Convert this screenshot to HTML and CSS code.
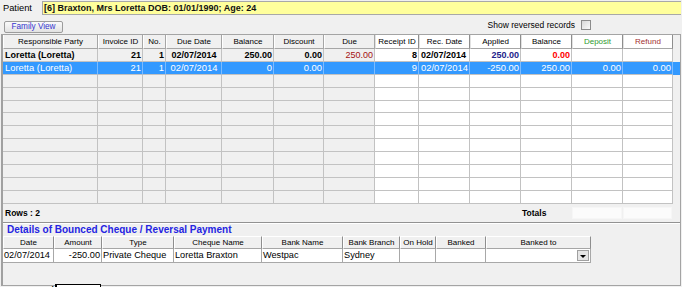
FILE: index.html
```html
<!DOCTYPE html>
<html>
<head>
<meta charset="utf-8">
<link rel="stylesheet" href="styles.css">
</head>
<body>
<div class="top">
  <span class="lbl">Patient</span>
  <div class="patient">[6] Braxton, Mrs Loretta DOB: 01/01/1990; Age: 24</div>
</div>
<div class="toolbar">
  <button class="btn">Family View</button>
  <div class="rev"><span>Show reversed records</span><span class="chk"></span></div>
</div>
<div class="frame">
  <div class="grid">
    <div class="row head">
      <div class="c">Responsible Party</div><div class="c">Invoice ID</div><div class="c">No.</div><div class="c">Due Date</div><div class="c">Balance</div><div class="c">Discount</div><div class="c">Due</div>
      <div class="c w">Receipt ID</div><div class="c w">Rec. Date</div><div class="c w">Applied</div><div class="c w">Balance</div><div class="c w green">Deposit</div><div class="c w maroon">Refund</div><div class="f"></div>
    </div>
    <div class="row r1">
      <div class="c">Loretta (Loretta)</div><div class="c r">21</div><div class="c r">1</div><div class="c ctr">02/07/2014</div><div class="c r">250.00</div><div class="c r">0.00</div><div class="c r due">250.00</div>
      <div class="c w r">8</div><div class="c w">02/07/2014</div><div class="c w r navy">250.00</div><div class="c w r red">0.00</div><div class="c w r"></div><div class="c w r"></div><div class="f"></div>
    </div>
    <div class="row sel">
      <div class="c">Loretta (Loretta)</div><div class="c r">21</div><div class="c r">1</div><div class="c ctr">02/07/2014</div><div class="c r">0</div><div class="c r">0.00</div><div class="c r"></div>
      <div class="c r">9</div><div class="c">02/07/2014</div><div class="c r">-250.00</div><div class="c r">250.00</div><div class="c r">0.00</div><div class="c r">0.00</div><div class="f"></div>
    </div>
    <div class="row"><div class="c"></div><div class="c"></div><div class="c"></div><div class="c"></div><div class="c"></div><div class="c"></div><div class="c"></div><div class="c w"></div><div class="c w"></div><div class="c w"></div><div class="c w"></div><div class="c w"></div><div class="c w"></div><div class="f"></div></div>
    <div class="row"><div class="c"></div><div class="c"></div><div class="c"></div><div class="c"></div><div class="c"></div><div class="c"></div><div class="c"></div><div class="c w"></div><div class="c w"></div><div class="c w"></div><div class="c w"></div><div class="c w"></div><div class="c w"></div><div class="f"></div></div>
    <div class="row"><div class="c"></div><div class="c"></div><div class="c"></div><div class="c"></div><div class="c"></div><div class="c"></div><div class="c"></div><div class="c w"></div><div class="c w"></div><div class="c w"></div><div class="c w"></div><div class="c w"></div><div class="c w"></div><div class="f"></div></div>
    <div class="row"><div class="c"></div><div class="c"></div><div class="c"></div><div class="c"></div><div class="c"></div><div class="c"></div><div class="c"></div><div class="c w"></div><div class="c w"></div><div class="c w"></div><div class="c w"></div><div class="c w"></div><div class="c w"></div><div class="f"></div></div>
    <div class="row"><div class="c"></div><div class="c"></div><div class="c"></div><div class="c"></div><div class="c"></div><div class="c"></div><div class="c"></div><div class="c w"></div><div class="c w"></div><div class="c w"></div><div class="c w"></div><div class="c w"></div><div class="c w"></div><div class="f"></div></div>
    <div class="row"><div class="c"></div><div class="c"></div><div class="c"></div><div class="c"></div><div class="c"></div><div class="c"></div><div class="c"></div><div class="c w"></div><div class="c w"></div><div class="c w"></div><div class="c w"></div><div class="c w"></div><div class="c w"></div><div class="f"></div></div>
    <div class="row"><div class="c"></div><div class="c"></div><div class="c"></div><div class="c"></div><div class="c"></div><div class="c"></div><div class="c"></div><div class="c w"></div><div class="c w"></div><div class="c w"></div><div class="c w"></div><div class="c w"></div><div class="c w"></div><div class="f"></div></div>
    <div class="row"><div class="c"></div><div class="c"></div><div class="c"></div><div class="c"></div><div class="c"></div><div class="c"></div><div class="c"></div><div class="c w"></div><div class="c w"></div><div class="c w"></div><div class="c w"></div><div class="c w"></div><div class="c w"></div><div class="f"></div></div>
    <div class="row"><div class="c"></div><div class="c"></div><div class="c"></div><div class="c"></div><div class="c"></div><div class="c"></div><div class="c"></div><div class="c w"></div><div class="c w"></div><div class="c w"></div><div class="c w"></div><div class="c w"></div><div class="c w"></div><div class="f"></div></div>
    <div class="row"><div class="c"></div><div class="c"></div><div class="c"></div><div class="c"></div><div class="c"></div><div class="c"></div><div class="c"></div><div class="c w"></div><div class="c w"></div><div class="c w"></div><div class="c w"></div><div class="c w"></div><div class="c w"></div><div class="f"></div></div>
    <div class="foot">
      <div class="rows">Rows : 2</div>
      <div class="totals">Totals</div>
      <div class="tot"></div>
      <div class="tot"></div>
    </div>
  </div>
  <div class="details">
    <div class="title">Details of Bounced Cheque / Reversal Payment</div>
    <div class="srow shead">
      <div class="s">Date</div><div class="s">Amount</div><div class="s">Type</div><div class="s">Cheque Name</div><div class="s">Bank Name</div><div class="s">Bank Branch</div><div class="s">On Hold</div><div class="s">Banked</div><div class="s">Banked to</div>
    </div>
    <div class="srow sdata">
      <div class="s">02/07/2014</div><div class="s r">-250.00</div><div class="s">Private Cheque</div><div class="s">Loretta Braxton</div><div class="s">Westpac</div><div class="s">Sydney</div><div class="s"></div><div class="s"></div><div class="s combo"><span class="drop"></span></div>
    </div>
    <div class="total">
      <span class="tlabel">Total</span>
      <div class="tbox">-250.00</div>
    </div>
  </div>
</div>
</body>
</html>
```
FILE: styles.css
```css
html, body {
  margin: 0;
  padding: 0;
}
body {
  width: 682px;
  height: 287px;
  overflow: hidden;
  background: #f0f0f0;
  font-family: "Liberation Sans", Arial, sans-serif;
  color: #000;
}
.top {
  display: flex;
  align-items: stretch;
  padding: 1px 1px 0 3px;
  height: 14px;
}
.lbl {
  width: 39px;
  font-size: 9.3px;
  line-height: 14px;
}
.patient {
  flex: 1;
  box-sizing: border-box;
  background: #ffff9c;
  border: 1px solid #a8a8a8;
  border-right: none;
  font-size: 9px;
  font-weight: bold;
  line-height: 12px;
  padding-left: 1px;
  color: #111;
}
.toolbar {
  height: 19px;
  display: flex;
  align-items: flex-start;
  justify-content: space-between;
}
.btn {
  margin: 6px 0 0 4px;
  width: 59px;
  height: 12px;
  padding: 0;
  border: 1px solid #9c9c9c;
  border-radius: 2px;
  background: linear-gradient(#fafafa, #e2e2e2);
  font-family: "Liberation Sans", Arial, sans-serif;
  font-size: 8.2px;
  line-height: 10px;
  color: #3535d0;
}
.rev {
  display: flex;
  align-items: center;
  margin: 5px 91px 0 0;
  font-size: 8.5px;
  line-height: 10px;
  gap: 6px;
}
.chk {
  width: 10px;
  height: 10px;
  box-sizing: border-box;
  border: 1px solid #8c8c8c;
  background: linear-gradient(135deg, #d8d8d8, #fafafa);
}
.frame {
  margin-left: 1px;
  width: 680px;
  height: 252px;
  box-sizing: border-box;
  border: 1px solid #a4a4a4;
  border-left: 2px solid #a0a0a0;
}
.grid {
  border-bottom: 1px solid #929292;
}
.row, .foot {
  display: grid;
  grid-template-columns: 95px 45px 23px 56px 52px 50px 51px 44px 51px 51px 51px 51px 50px 1fr;
  height: 12.88px;
}
.c {
  box-sizing: border-box;
  border-right: 1px solid #c2c2c2;
  border-bottom: 1px solid #c2c2c2;
  font-size: 9px;
  white-space: nowrap;
  overflow: hidden;
  padding: 0 1px 0 2px;
  display: flex;
  align-items: center;
}
.c.w { background: #fff; }
.c.r { justify-content: flex-end; }
.c.ctr { justify-content: center; }
.head {
  height: 14px;
}
.head .c {
  font-size: 8px;
  justify-content: center;
  border-left: 1px solid #fff;
  border-right: 1px solid #a6a6a6;
  border-bottom: 1px solid #a6a6a6;
  padding: 0;
}
.head .c.w {
  border-left: 1px solid #e2e2e2;
  border-right: 1px solid #8e8e8e;
}
.green { color: #2f9a2f; }
.maroon { color: #a33030; }
.r1 .c { font-weight: bold; }
.r1 .c.due { font-weight: normal; color: #a41010; }
.navy { color: #23238a; }
.red { color: #ff0000; }
.sel { background: #3399ff; }
.sel .c {
  color: #fff;
  font-size: 9.4px;
  border-right-color: #7cbcff;
  border-bottom-color: #c2c2c2;
}
.foot {
  height: 18px;
}
.rows {
  grid-column: 1 / 11;
  font-size: 8.5px;
  font-weight: bold;
  padding-left: 2px;
  display: flex;
  align-items: center;
}
.totals {
  font-size: 8.5px;
  font-weight: bold;
  padding-left: 1px;
  display: flex;
  align-items: center;
}
.tot {
  margin: 3px 1px 3px 0;
  background: #fbfbfb;
  border: 1px solid #f6f6f6;
}
.details {
  border-top: 1px solid #fff;
}
.title {
  height: 12px;
  line-height: 12px;
  padding-left: 4px;
  font-size: 10px;
  font-weight: bold;
  color: #2424e2;
}
.srow {
  display: grid;
  grid-template-columns: 51px 48px 72px 88px 81px 57px 36px 50px 105px;
}
.s {
  box-sizing: border-box;
  white-space: nowrap;
  overflow: hidden;
  display: flex;
  align-items: center;
}
.shead { height: 13px; }
.shead .s {
  font-size: 8px;
  justify-content: center;
  border-left: 1px solid #fff;
  border-top: 1px solid #fff;
  border-right: 1px solid #8e8e8e;
  border-bottom: 1px solid #a6a6a6;
}
.sdata { height: 14px; }
.sdata .s {
  background: #fff;
  font-size: 9.2px;
  padding: 0 1px 0 1px;
  border-right: 1px solid #a8a8a8;
  border-bottom: 1px solid #a8a8a8;
}
.sdata .s.r { justify-content: flex-end; }
.combo {
  justify-content: flex-end;
  padding: 0 !important;
}
.drop {
  width: 12px;
  height: 11px;
  box-sizing: border-box;
  margin: 0 1px 0 0;
  background: #e6e6e6;
  border: 1px solid #a0a0a0;
  display: flex;
  align-items: flex-end;
  justify-content: center;
  padding-bottom: 2px;
}
.drop::after {
  content: "";
  border-left: 3px solid transparent;
  border-right: 3px solid transparent;
  border-top: 3px solid #000;
}
.total {
  display: flex;
  align-items: center;
  margin-top: 21px;
}
.tlabel {
  width: 51px;
  text-align: right;
  font-size: 8.5px;
  font-weight: bold;
  padding-right: 1px;
}
.tbox {
  width: 46px;
  height: 12px;
  box-sizing: border-box;
  border: 1px solid #000;
  border-left-width: 2px;
  background: #fff;
  font-size: 9px;
  line-height: 10px;
  text-align: right;
  padding-right: 1px;
}
```
